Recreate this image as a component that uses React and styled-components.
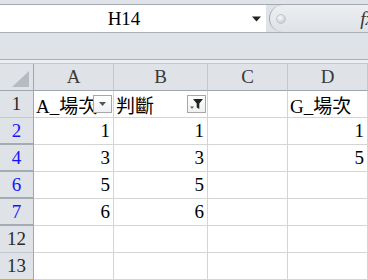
import React from 'react';
import styled, { createGlobalStyle } from 'styled-components';

const GlobalStyle = createGlobalStyle`
  html, body {
    margin: 0;
    padding: 0;
    background: #ffffff;
  }
`;

const cellFont = `"Liberation Serif", "Noto Sans CJK TC", serif`;

// Styled-components
const Window = styled.div`
  width: 368px;
  height: 280px;
  overflow: hidden;
  background: #dfe3e8;
  font-family: ${cellFont};
`;

const FormulaRow = styled.div`
  display: flex;
  height: 27px;
  margin-top: 4px;
  border-top: 1px solid #a3aab3;
  border-bottom: 1px solid #a9b0b8;
`;

const NameBox = styled.div`
  width: 266px;
  display: flex;
  align-items: center;
  background: #ffffff;
`;

const NameText = styled.div`
  flex: 1;
  text-align: center;
  font-size: 19px;
  color: #000;
  padding-left: 2px;
`;

const DropArrow = styled.div`
  width: 20px;
  display: flex;
  justify-content: center;
  align-items: center;
`;

const Pill = styled.div`
  flex: 1;
  display: flex;
  align-items: center;
  position: relative;
  margin-left: 3px;
  border-left: 1px solid #a3aab3;
  border-radius: 14px 0 0 14px;
  background: linear-gradient(#eceef1, #dfe3e8);
  padding-left: 6px;
`;

const Grip = styled.div`
  width: 8px;
  height: 8px;
  border-radius: 50%;
  background: radial-gradient(circle at 40% 35%, #fafbfc, #b9bec5);
  border: 1px solid #c3c8ce;
`;

const Fx = styled.div`
  margin-left: auto;
  margin-right: -6px;
  font-style: italic;
  font-size: 19px;
  color: #333;
`;

const Band = styled.div`
  height: 26px;
  border-bottom: 1px solid #a9b0b8;
`;

const Gap = styled.div`
  height: 3px;
  background: #eceef1;
  border-bottom: 1px solid #c3c8ce;
`;

const Sheet = styled.div`
  display: grid;
  grid-template-columns: 34px 80px 94px 80px 80px 1fr;
  grid-auto-rows: 27px;
  background: #ffffff;
`;

const Corner = styled.div`
  background: #dfe3e8;
  border-right: 1px solid #9ea6ae;
  border-bottom: 1px solid #9ea6ae;
  display: flex;
  align-items: flex-end;
  justify-content: flex-end;
  padding: 0 4px 3px 0;
`;

const ColHead = styled.div`
  background: #dfe3e8;
  border-right: 1px solid #c3c8ce;
  border-bottom: 1px solid #9ea6ae;
  display: flex;
  align-items: center;
  justify-content: center;
  font-size: 19px;
  color: #3a3a3a;
`;

const RowHead = styled.div`
  background: #dfe3e8;
  border-right: 1px solid #9ea6ae;
  border-bottom: ${(p) => (p.$gap ? '2px solid #a4abb3' : '1px solid #c3c8ce')};
  ${(p) => p.$last && 'border-bottom: 1px solid #e4a441;'}
  display: flex;
  align-items: center;
  justify-content: center;
  font-size: 19px;
  color: ${(p) => (p.$filtered ? '#1414ff' : '#2a2a2a')};
`;

const Cell = styled.div`
  position: relative;
  overflow: hidden;
  white-space: nowrap;
  border-right: 1px solid #d4d4d4;
  border-bottom: 1px solid #d4d4d4;
  display: flex;
  align-items: center;
  justify-content: ${(p) => (p.$num ? 'flex-end' : 'flex-start')};
  padding: 0 3px 0 2px;
  font-size: 19px;
  color: #000;
`;

const FilterButton = styled.div`
  position: absolute;
  right: 1px;
  top: 4px;
  width: 19px;
  height: 18px;
  box-sizing: border-box;
  border: 1px solid #a7a7a7;
  background: linear-gradient(#ffffff, #eef0f2);
  display: flex;
  align-items: center;
  justify-content: center;
`;

const Filler = styled.div`
  background: #ffffff;
`;

const columns = ['A', 'B', 'C', 'D'];

const rows = [
  { n: 1, cells: [null, null, null, 'G_場次'] },
  { n: 2, filtered: true, gap: true, cells: ['1', '1', null, '1'] },
  { n: 4, filtered: true, gap: true, cells: ['3', '3', null, '5'] },
  { n: 6, filtered: true, gap: true, cells: ['5', '5', null, null] },
  { n: 7, filtered: true, gap: true, cells: ['6', '6', null, null] },
  { n: 12, cells: [null, null, null, null] },
  { n: 13, last: true, cells: [null, null, null, null] },
];

const ArrowIcon = () => (
  <svg width="9" height="6" viewBox="0 0 9 6">
    <path d="M0 0.5 H9 L4.5 5.5 Z" fill="#222" />
  </svg>
);

const SmallArrow = () => (
  <svg width="7" height="4" viewBox="0 0 7 4">
    <path d="M0 0 H7 L3.5 4 Z" fill="#555" />
  </svg>
);

const FunnelIcon = () => (
  <svg width="13" height="12" viewBox="0 0 13 12">
    <path d="M3 1 H13 L9.3 5.5 V11 L6.7 9.6 V5.5 Z" fill="#222" />
    <path d="M0 8.5 H4 L2 10.8 Z" fill="#555" />
  </svg>
);

const CornerTriangle = () => (
  <svg width="17" height="16" viewBox="0 0 17 16">
    <path d="M17 0 V16 H0 Z" fill="#b6bbc1" />
  </svg>
);

const App = () => {
  return (
    <Window>
      <GlobalStyle />
      <FormulaRow>
        <NameBox>
          <NameText>H14</NameText>
          <DropArrow>
            <ArrowIcon />
          </DropArrow>
        </NameBox>
        <Pill>
          <Grip />
          <Fx>fx</Fx>
        </Pill>
      </FormulaRow>
      <Band />
      <Gap />
      <Sheet>
        <Corner>
          <CornerTriangle />
        </Corner>
        {columns.map((c) => (
          <ColHead key={c}>{c}</ColHead>
        ))}
        <Filler />

        <RowHead>1</RowHead>
        <Cell>
          A_場次
          <FilterButton>
            <SmallArrow />
          </FilterButton>
        </Cell>
        <Cell>
          判斷
          <FilterButton>
            <FunnelIcon />
          </FilterButton>
        </Cell>
        <Cell />
        <Cell>G_場次</Cell>
        <Filler />

        {rows.slice(1).map((r) => (
          <React.Fragment key={r.n}>
            <RowHead $filtered={r.filtered} $gap={r.gap} $last={r.last}>
              {r.n}
            </RowHead>
            {r.cells.map((v, i) => (
              <Cell key={i} $num>
                {v}
              </Cell>
            ))}
            <Filler />
          </React.Fragment>
        ))}
      </Sheet>
    </Window>
  );
};

export default App;
